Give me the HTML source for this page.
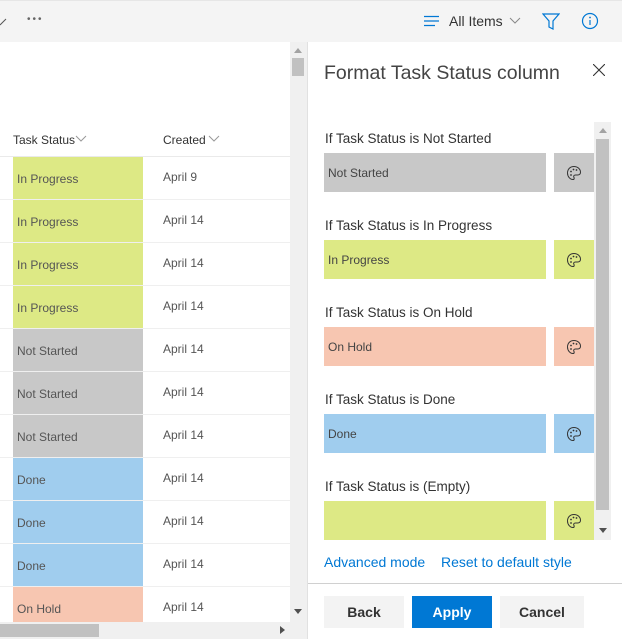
<!DOCTYPE html>
<html><head><meta charset="utf-8"><style>
*{box-sizing:border-box;margin:0;padding:0}
body{width:622px;height:639px;overflow:hidden;background:#fff;font-family:"Liberation Sans",sans-serif;position:relative;color:#333}
.abs{position:absolute}
.top{left:0;top:0;width:622px;height:42px;background:#f4f4f4;border-top:1px solid #e6e6e6}
.row{left:0;width:290px;height:43px;border-bottom:1px solid #efefef}
.st{position:absolute;left:13px;width:130px;top:0;height:42px;font-size:12px;color:#555;padding:15px 0 0 4px}
.dt{position:absolute;left:163px;top:13px;font-size:12px;color:#555}
.g{background:#dde985}.s{background:#c8c8c8}.b{background:#a0cdee}.p{background:#f7c6b1}
.lbl{left:325px;font-size:13.5px;color:#333}
.box{left:324px;width:222px;height:39px;font-size:12px;color:#444;padding:13px 0 0 4px}
.pal{left:554px;width:40px;height:39px}
.pal svg{position:absolute;left:12px;top:12px}
.btn{top:596px;height:32px;font-size:14px;font-weight:bold;text-align:center;line-height:32px;background:#f3f3f3;color:#333}
</style></head><body>
<div class="abs top"></div>
<svg class="abs" style="left:0;top:16px" width="8" height="10"><path d="M0 9 L6 3" stroke="#555" fill="none"/></svg>
<div class="abs" style="left:27px;top:14px;font-size:10px;color:#666;letter-spacing:2px">•••</div>
<svg class="abs" style="left:424px;top:15px" width="16" height="12"><path d="M0 1.5H15M0 6H15M0 10.5H11" stroke="#0078d4" stroke-width="1.2"/></svg>
<div class="abs" style="left:449px;top:13px;font-size:14px;color:#333">All Items</div>
<svg class="abs" style="left:509px;top:17px" width="12" height="8"><path d="M1 1L6 6L11 1" stroke="#888" fill="none"/></svg>
<svg class="abs" style="left:542px;top:13px" width="18" height="17"><path d="M1 1H17L11 8V16L7 14V8Z" stroke="#0078d4" fill="none" stroke-width="1.2"/></svg>
<svg class="abs" style="left:581px;top:12px" width="18" height="18"><circle cx="9" cy="9" r="7.5" stroke="#0078d4" fill="none" stroke-width="1.2"/><path d="M9 8V13" stroke="#0078d4" stroke-width="1.2"/><circle cx="9" cy="5.5" r=".9" fill="#0078d4"/></svg>

<div class="abs" style="left:13px;top:133px;font-size:12px;color:#333">Task Status</div>
<svg class="abs" style="left:75px;top:135px" width="12" height="8"><path d="M1 1L6 6L11 1" stroke="#999" fill="none"/></svg>
<div class="abs" style="left:163px;top:133px;font-size:12px;color:#333">Created</div>
<svg class="abs" style="left:208px;top:135px" width="12" height="8"><path d="M1 1L6 6L11 1" stroke="#999" fill="none"/></svg>
<div class="abs" style="left:0;top:156px;width:290px;height:1px;background:#eaeaea"></div>

<div class="abs row" style="top:157px"><div class="st g">In Progress</div><div class="dt">April 9</div></div>
<div class="abs row" style="top:200px"><div class="st g">In Progress</div><div class="dt">April 14</div></div>
<div class="abs row" style="top:243px"><div class="st g">In Progress</div><div class="dt">April 14</div></div>
<div class="abs row" style="top:286px"><div class="st g">In Progress</div><div class="dt">April 14</div></div>
<div class="abs row" style="top:329px"><div class="st s">Not Started</div><div class="dt">April 14</div></div>
<div class="abs row" style="top:372px"><div class="st s">Not Started</div><div class="dt">April 14</div></div>
<div class="abs row" style="top:415px"><div class="st s">Not Started</div><div class="dt">April 14</div></div>
<div class="abs row" style="top:458px"><div class="st b">Done</div><div class="dt">April 14</div></div>
<div class="abs row" style="top:501px"><div class="st b">Done</div><div class="dt">April 14</div></div>
<div class="abs row" style="top:544px"><div class="st b">Done</div><div class="dt">April 14</div></div>
<div class="abs row" style="top:587px"><div class="st p">On Hold</div><div class="dt">April 14</div></div>

<div class="abs" style="left:290px;top:42px;width:17px;height:597px;background:#f0f0f0"></div>
<div class="abs" style="left:292px;top:58px;width:12px;height:18px;background:#c1c1c1"></div>
<svg class="abs" style="left:294px;top:48px" width="8" height="5"><path d="M0 5L4 0L8 5Z" fill="#a3a3a3"/></svg>
<svg class="abs" style="left:294px;top:609px" width="8" height="5"><path d="M0 0L4 5L8 0Z" fill="#505050"/></svg>
<div class="abs" style="left:0;top:622px;width:290px;height:17px;background:#f0f0f0"></div>
<div class="abs" style="left:0;top:624px;width:99px;height:13px;background:#c1c1c1"></div>
<svg class="abs" style="left:280px;top:626px" width="5" height="8"><path d="M0 0L5 4L0 8Z" fill="#505050"/></svg>

<div class="abs" style="left:307px;top:42px;width:1px;height:597px;background:#e1e1e1"></div>
<div class="abs" style="left:324px;top:62px;font-size:19.5px;color:#444">Format Task Status column</div>
<svg class="abs" style="left:593px;top:64px" width="12" height="12"><path d="M0 0L12 12M12 0L0 12" stroke="#333" stroke-width="1.1"/></svg>

<div class="abs" style="left:594px;top:122px;width:17px;height:418px;background:#f0f0f0"></div>
<div class="abs" style="left:596px;top:139px;width:13px;height:371px;background:#c1c1c1"></div>
<svg class="abs" style="left:599px;top:128px" width="8" height="5"><path d="M0 5L4 0L8 5Z" fill="#a3a3a3"/></svg>
<svg class="abs" style="left:599px;top:528px" width="8" height="5"><path d="M0 0L4 5L8 0Z" fill="#505050"/></svg>

<div class="abs lbl" style="top:131px">If Task Status is Not Started</div>
<div class="abs box s" style="top:153px">Not Started</div><div class="abs pal s" style="top:153px"><svg width="16" height="16"><path d="M8 1.5C4 1.5 1.5 4.3 1.5 8C1.5 11.5 4 14.5 7 14.5C8.5 14.5 8.3 13 7.8 12C7.3 11 8 10 9.5 10H11.5C13.5 10 14.5 8.8 14.5 7.3C14.5 4 11.5 1.5 8 1.5Z" fill="none" stroke="#333"/><circle cx="5" cy="6.5" r=".9" fill="#333"/><circle cx="7.5" cy="4.5" r=".9" fill="#333"/><circle cx="10.5" cy="5" r=".9" fill="#333"/><circle cx="5" cy="10" r=".9" fill="#333"/></svg></div>
<div class="abs lbl" style="top:218px">If Task Status is In Progress</div>
<div class="abs box g" style="top:240px">In Progress</div><div class="abs pal g" style="top:240px"><svg width="16" height="16"><path d="M8 1.5C4 1.5 1.5 4.3 1.5 8C1.5 11.5 4 14.5 7 14.5C8.5 14.5 8.3 13 7.8 12C7.3 11 8 10 9.5 10H11.5C13.5 10 14.5 8.8 14.5 7.3C14.5 4 11.5 1.5 8 1.5Z" fill="none" stroke="#333"/><circle cx="5" cy="6.5" r=".9" fill="#333"/><circle cx="7.5" cy="4.5" r=".9" fill="#333"/><circle cx="10.5" cy="5" r=".9" fill="#333"/><circle cx="5" cy="10" r=".9" fill="#333"/></svg></div>
<div class="abs lbl" style="top:305px">If Task Status is On Hold</div>
<div class="abs box p" style="top:327px">On Hold</div><div class="abs pal p" style="top:327px"><svg width="16" height="16"><path d="M8 1.5C4 1.5 1.5 4.3 1.5 8C1.5 11.5 4 14.5 7 14.5C8.5 14.5 8.3 13 7.8 12C7.3 11 8 10 9.5 10H11.5C13.5 10 14.5 8.8 14.5 7.3C14.5 4 11.5 1.5 8 1.5Z" fill="none" stroke="#333"/><circle cx="5" cy="6.5" r=".9" fill="#333"/><circle cx="7.5" cy="4.5" r=".9" fill="#333"/><circle cx="10.5" cy="5" r=".9" fill="#333"/><circle cx="5" cy="10" r=".9" fill="#333"/></svg></div>
<div class="abs lbl" style="top:392px">If Task Status is Done</div>
<div class="abs box b" style="top:414px">Done</div><div class="abs pal b" style="top:414px"><svg width="16" height="16"><path d="M8 1.5C4 1.5 1.5 4.3 1.5 8C1.5 11.5 4 14.5 7 14.5C8.5 14.5 8.3 13 7.8 12C7.3 11 8 10 9.5 10H11.5C13.5 10 14.5 8.8 14.5 7.3C14.5 4 11.5 1.5 8 1.5Z" fill="none" stroke="#333"/><circle cx="5" cy="6.5" r=".9" fill="#333"/><circle cx="7.5" cy="4.5" r=".9" fill="#333"/><circle cx="10.5" cy="5" r=".9" fill="#333"/><circle cx="5" cy="10" r=".9" fill="#333"/></svg></div>
<div class="abs lbl" style="top:479px">If Task Status is (Empty)</div>
<div class="abs box g" style="top:501px"></div><div class="abs pal g" style="top:501px"><svg width="16" height="16"><path d="M8 1.5C4 1.5 1.5 4.3 1.5 8C1.5 11.5 4 14.5 7 14.5C8.5 14.5 8.3 13 7.8 12C7.3 11 8 10 9.5 10H11.5C13.5 10 14.5 8.8 14.5 7.3C14.5 4 11.5 1.5 8 1.5Z" fill="none" stroke="#333"/><circle cx="5" cy="6.5" r=".9" fill="#333"/><circle cx="7.5" cy="4.5" r=".9" fill="#333"/><circle cx="10.5" cy="5" r=".9" fill="#333"/><circle cx="5" cy="10" r=".9" fill="#333"/></svg></div>

<div class="abs" style="left:324px;top:554px;font-size:14px;color:#0078d4">Advanced mode</div>
<div class="abs" style="left:441px;top:554px;font-size:14px;color:#0078d4">Reset to default style</div>
<div class="abs" style="left:308px;top:583px;width:314px;height:1px;background:#d0d0d0"></div>
<div class="abs btn" style="left:324px;width:80px">Back</div>
<div class="abs btn" style="left:412px;width:80px;background:#0078d4;color:#fff">Apply</div>
<div class="abs btn" style="left:500px;width:84px">Cancel</div>
</body></html>
